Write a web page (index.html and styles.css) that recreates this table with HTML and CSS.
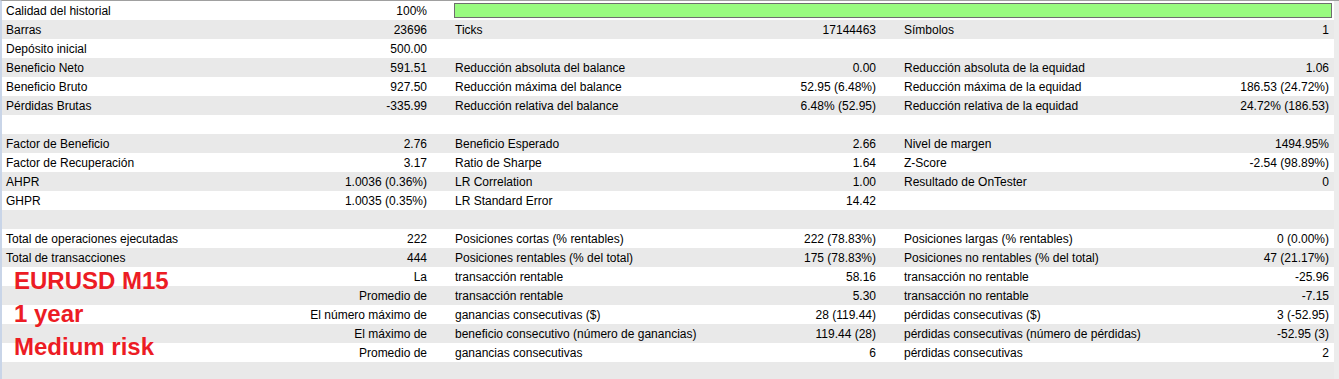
FILE: index.html
```html
<!DOCTYPE html>
<html lang="es">
<head>
<meta charset="utf-8">
<title>Informe del probador</title>
<link rel="stylesheet" href="styles.css">
</head>
<body>
<div class="report">
  <div class="row">
    <div class="cell"><span class="lbl">Calidad del historial</span><span class="val">100%</span></div>
    <div class="bar-cell"><div class="bar"></div></div>
  </div>
  <div class="row">
    <div class="cell"><span class="lbl">Barras</span><span class="val">23696</span></div>
    <div class="cell"><span class="lbl">Ticks</span><span class="val">17144463</span></div>
    <div class="cell last"><span class="lbl">Símbolos</span><span class="val">1</span></div>
  </div>
  <div class="row">
    <div class="cell"><span class="lbl">Depósito inicial</span><span class="val">500.00</span></div>
    <div class="cell"></div>
    <div class="cell last"></div>
  </div>
  <div class="row">
    <div class="cell"><span class="lbl">Beneficio Neto</span><span class="val">591.51</span></div>
    <div class="cell"><span class="lbl">Reducción absoluta del balance</span><span class="val">0.00</span></div>
    <div class="cell last"><span class="lbl">Reducción absoluta de la equidad</span><span class="val">1.06</span></div>
  </div>
  <div class="row">
    <div class="cell"><span class="lbl">Beneficio Bruto</span><span class="val">927.50</span></div>
    <div class="cell"><span class="lbl">Reducción máxima del balance</span><span class="val">52.95 (6.48%)</span></div>
    <div class="cell last"><span class="lbl">Reducción máxima de la equidad</span><span class="val">186.53 (24.72%)</span></div>
  </div>
  <div class="row">
    <div class="cell"><span class="lbl">Pérdidas Brutas</span><span class="val">-335.99</span></div>
    <div class="cell"><span class="lbl">Reducción relativa del balance</span><span class="val">6.48% (52.95)</span></div>
    <div class="cell last"><span class="lbl">Reducción relativa de la equidad</span><span class="val">24.72% (186.53)</span></div>
  </div>
  <div class="row">
    <div class="cell"></div><div class="cell"></div><div class="cell last"></div>
  </div>
  <div class="row">
    <div class="cell"><span class="lbl">Factor de Beneficio</span><span class="val">2.76</span></div>
    <div class="cell"><span class="lbl">Beneficio Esperado</span><span class="val">2.66</span></div>
    <div class="cell last"><span class="lbl">Nivel de margen</span><span class="val">1494.95%</span></div>
  </div>
  <div class="row">
    <div class="cell"><span class="lbl">Factor de Recuperación</span><span class="val">3.17</span></div>
    <div class="cell"><span class="lbl">Ratio de Sharpe</span><span class="val">1.64</span></div>
    <div class="cell last"><span class="lbl">Z-Score</span><span class="val">-2.54 (98.89%)</span></div>
  </div>
  <div class="row">
    <div class="cell"><span class="lbl">AHPR</span><span class="val">1.0036 (0.36%)</span></div>
    <div class="cell"><span class="lbl">LR Correlation</span><span class="val">1.00</span></div>
    <div class="cell last"><span class="lbl">Resultado de OnTester</span><span class="val">0</span></div>
  </div>
  <div class="row">
    <div class="cell"><span class="lbl">GHPR</span><span class="val">1.0035 (0.35%)</span></div>
    <div class="cell"><span class="lbl">LR Standard Error</span><span class="val">14.42</span></div>
    <div class="cell last"></div>
  </div>
  <div class="row">
    <div class="cell"></div><div class="cell"></div><div class="cell last"></div>
  </div>
  <div class="row">
    <div class="cell"><span class="lbl">Total de operaciones ejecutadas</span><span class="val">222</span></div>
    <div class="cell"><span class="lbl">Posiciones cortas (% rentables)</span><span class="val">222 (78.83%)</span></div>
    <div class="cell last"><span class="lbl">Posiciones largas (% rentables)</span><span class="val">0 (0.00%)</span></div>
  </div>
  <div class="row">
    <div class="cell"><span class="lbl">Total de transacciones</span><span class="val">444</span></div>
    <div class="cell"><span class="lbl">Posiciones rentables (% del total)</span><span class="val">175 (78.83%)</span></div>
    <div class="cell last"><span class="lbl">Posiciones no rentables (% del total)</span><span class="val">47 (21.17%)</span></div>
  </div>
  <div class="row">
    <div class="cell"><span class="lbl"></span><span class="val">La</span></div>
    <div class="cell"><span class="lbl">transacción rentable</span><span class="val">58.16</span></div>
    <div class="cell last"><span class="lbl">transacción no rentable</span><span class="val">-25.96</span></div>
  </div>
  <div class="row">
    <div class="cell"><span class="lbl"></span><span class="val">Promedio de</span></div>
    <div class="cell"><span class="lbl">transacción rentable</span><span class="val">5.30</span></div>
    <div class="cell last"><span class="lbl">transacción no rentable</span><span class="val">-7.15</span></div>
  </div>
  <div class="row">
    <div class="cell"><span class="lbl"></span><span class="val">El número máximo de</span></div>
    <div class="cell"><span class="lbl">ganancias consecutivas ($)</span><span class="val">28 (119.44)</span></div>
    <div class="cell last"><span class="lbl">pérdidas consecutivas ($)</span><span class="val">3 (-52.95)</span></div>
  </div>
  <div class="row">
    <div class="cell"><span class="lbl"></span><span class="val">El máximo de</span></div>
    <div class="cell"><span class="lbl">beneficio consecutivo (número de ganancias)</span><span class="val">119.44 (28)</span></div>
    <div class="cell last"><span class="lbl">pérdidas consecutivas (número de pérdidas)</span><span class="val">-52.95 (3)</span></div>
  </div>
  <div class="row">
    <div class="cell"><span class="lbl"></span><span class="val">Promedio de</span></div>
    <div class="cell"><span class="lbl">ganancias consecutivas</span><span class="val">6</span></div>
    <div class="cell last"><span class="lbl">pérdidas consecutivas</span><span class="val">2</span></div>
  </div>
  <div class="row">
    <div class="cell"></div><div class="cell"></div><div class="cell last"></div>
  </div>

  <div class="overlay">
    <div class="note">EURUSD M15</div>
    <div class="note">1 year</div>
    <div class="note">Medium risk</div>
  </div>
</div>
</body>
</html>
```

FILE: styles.css
```css
html, body {
  margin: 0;
  padding: 0;
  background: #ececec;
  overflow: hidden;
}

body {
  font-family: "Liberation Sans", Arial, sans-serif;
  font-size: 12px;
  color: #000;
}

.report {
  position: relative;
  width: 1337px;
  height: 378px;
  border-top: 1px solid #a0a0a0;
  border-left: 2px solid #c9d5e8;
  background: #ececec;
  overflow: hidden;
}

.row {
  display: grid;
  grid-template-columns: 449px 449px 434px;
  width: 1332px;
  height: 19px;
  line-height: 20px;
  background: #ffffff;
}

.row:nth-child(even) {
  background: #e9e9e9;
}

.cell {
  display: flex;
  justify-content: space-between;
  padding: 0 24px 0 4px;
  white-space: nowrap;
  overflow: hidden;
}

.cell.last {
  padding-right: 5px;
}

.bar-cell {
  grid-column: 2 / 4;
  padding: 2px 2px 2px 3px;
}

.bar {
  height: 13px;
  border: 1px solid #6e6e6e;
  background: #99fb80;
}

.overlay {
  position: absolute;
  left: 12px;
  top: 263px;
}

.note {
  font-family: "Liberation Sans", Arial, sans-serif;
  font-weight: 700;
  font-size: 24px;
  line-height: 33px;
  color: #ec1c24;
}
```
